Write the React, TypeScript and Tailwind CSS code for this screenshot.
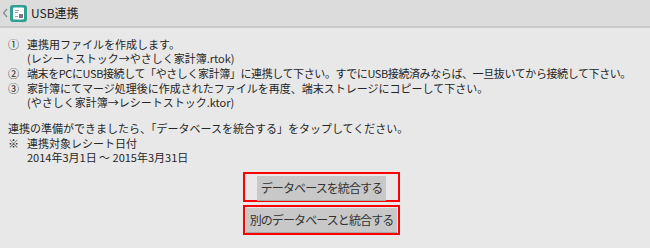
import React from 'react';

const jp = { fontFamily: '"Noto Sans CJK JP", "Noto Sans", sans-serif' };

const AppIcon: React.FC = () => (
  <svg width="17" height="17" viewBox="0 0 17 17">
    <rect x="0" y="0" width="17" height="17" rx="3" fill="#2f9e93" />
    <rect x="3" y="2.5" width="11" height="12" rx="1" fill="#ffffff" />
    <rect x="5" y="5" width="4" height="1" fill="#9aa" />
    <rect x="5" y="7" width="3" height="1" fill="#9aa" />
    <rect x="9" y="9" width="4" height="4" fill="#778" />
    <rect x="5" y="11" width="3" height="1" fill="#9aa" />
  </svg>
);

interface StepProps {
  mark: string;
  lines: string[];
  tight?: boolean;
}

const Step: React.FC<StepProps> = ({ mark, lines, tight }) => (
  <div className="flex">
    <span className="w-[19px] shrink-0">{mark}</span>
    <div className={`flex flex-col whitespace-nowrap ${tight ? 'tracking-[-0.4px]' : ''}`}>
      {lines.map((l) => (
        <span key={l}>{l}</span>
      ))}
    </div>
  </div>
);

export default function App() {
  return (
    <div className="w-[650px] h-[248px] bg-[#e8e8e8] text-[#262626] overflow-hidden" style={jp}>
      {/* header */}
      <div className="h-[28px] bg-[#dcdcdc] border-b-2 border-[#c9c9c9] flex items-center">
        <svg width="6" height="10" viewBox="0 0 6 10" className="ml-[2px]">
          <path d="M5 1 L1.5 5 L5 9" stroke="#8a8a8a" strokeWidth="1.2" fill="none" />
        </svg>
        <div className="ml-[2px]">
          <AppIcon />
        </div>
        <span className="ml-[4px] text-[12px] text-[#222]">USB連携</span>
      </div>

      {/* body */}
      <div className="pl-[8px] pt-[9px] text-[11px] leading-[14px] flex flex-col gap-[1px]">
        <Step mark="①" lines={['連携用ファイルを作成します。', '(レシートストック→やさしく家計簿.rtok)']} />
        <Step
          mark="②"
          tight
          lines={['端末をPCにUSB接続して「やさしく家計簿」に連携して下さい。すでにUSB接続済みならば、一旦抜いてから接続して下さい。']}
        />
        <Step
          mark="③"
          lines={['家計簿にてマージ処理後に作成されたファイルを再度、端末ストレージにコピーして下さい。', '(やさしく家計簿→レシートストック.ktor)']}
        />
        <div className="mt-[11px]">連携の準備ができましたら、「データベースを統合する」をタップしてください。</div>
        <Step mark="※" lines={['連携対象レシート日付', '2014年3月1日 ～ 2015年3月31日']} />
      </div>

      {/* buttons */}
      <div className="flex flex-col ml-[243px] mt-[8px] gap-[3px] w-[157px]">
        <div className="h-[30px] border-2 border-[#ff0000] flex justify-center pt-[2px]">
          <button className="w-[129px] h-[24px] bg-[#c8c8c8] shadow-[0_1px_0_#a8a8a8] text-[12px] leading-none tracking-[-0.9px] text-[#333] whitespace-nowrap">
            データベースを統合する
          </button>
        </div>
        <div className="h-[30px] border-2 border-[#ff0000] flex items-center justify-center">
          <button className="w-[151px] h-[24px] bg-[#c8c8c8] shadow-[0_1px_0_#a8a8a8] text-[12px] leading-none tracking-[-0.9px] text-[#333] whitespace-nowrap">
            別のデータベースと統合する
          </button>
        </div>
      </div>
    </div>
  );
}
